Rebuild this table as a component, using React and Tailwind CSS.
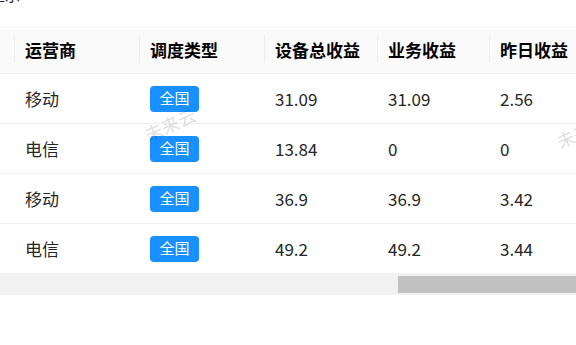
import React from 'react';

// table rows shown in the screenshot
const rows = [
  { op: '移动', total: '31.09', biz: '31.09', yest: '2.56' },
  { op: '电信', total: '13.84', biz: '0', yest: '0' },
  { op: '移动', total: '36.9', biz: '36.9', yest: '3.42' },
  { op: '电信', total: '49.2', biz: '49.2', yest: '3.44' },
];

const cols = 'grid grid-cols-[14px_125px_125px_113px_112px_87px]';

function HeadCell({ children, sep = true }) {
  return (
    <div className="relative flex items-center pl-[11px]">
      {sep && <span className="absolute left-0 top-[9px] h-[28px] w-px bg-[#ececec]" />}
      {children}
    </div>
  );
}

export default function App() {
  return (
    <div
      className="relative w-[576px] h-[345px] overflow-hidden bg-white text-[#262626]"
      style={{ fontFamily: '"Noto Sans CJK SC", "Noto Sans", sans-serif' }}
    >
      {/* clipped caption from above */}
      <div className="h-[26px] overflow-hidden">
        <div className="-mt-[15px] -ml-[10px] text-[15px] leading-[20px]">显示</div>
      </div>

      {/* header */}
      <div className={`${cols} h-[48px] bg-[#fafafa] border-b border-[#f0f0f0] text-[17px] font-bold text-black`}>
        <div />
        <HeadCell>运营商</HeadCell>
        <HeadCell>调度类型</HeadCell>
        <HeadCell>设备总收益</HeadCell>
        <HeadCell>业务收益</HeadCell>
        <HeadCell>昨日收益</HeadCell>
      </div>

      {/* body */}
      {rows.map((r, i) => (
        <div
          key={i}
          className={`${cols} text-[17px] ${i < rows.length - 1 ? 'h-[50px] border-b border-[#f0f0f0]' : 'h-[49px]'}`}
        >
          <div />
          <div className="flex items-center pl-[11px]">{r.op}</div>
          <div className="flex items-center pl-[11px]">
            <span className="flex items-center justify-center w-[49px] h-[26px] rounded-[4px] bg-[#1890ff] text-white text-[15px]">
              全国
            </span>
          </div>
          <div className="flex items-center pl-[11px]">{r.total}</div>
          <div className="flex items-center pl-[11px]">{r.biz}</div>
          <div className="flex items-center pl-[11px]">{r.yest}</div>
        </div>
      ))}

      {/* horizontal scrollbar */}
      <div className="flex h-[22px] bg-[#f1f1f1] pt-[3px]">
        <div className="ml-[398px] w-[178px] h-[17px] bg-[#c1c1c1]" />
      </div>

      {/* watermarks */}
      <div className="absolute left-[143px] top-[111px] -rotate-[24deg] whitespace-nowrap text-[18px] text-black/15 pointer-events-none">
        未来云
      </div>
      <div className="absolute left-[555px] top-[118px] -rotate-[24deg] whitespace-nowrap text-[18px] text-black/15 pointer-events-none">
        未来云
      </div>
    </div>
  );
}
